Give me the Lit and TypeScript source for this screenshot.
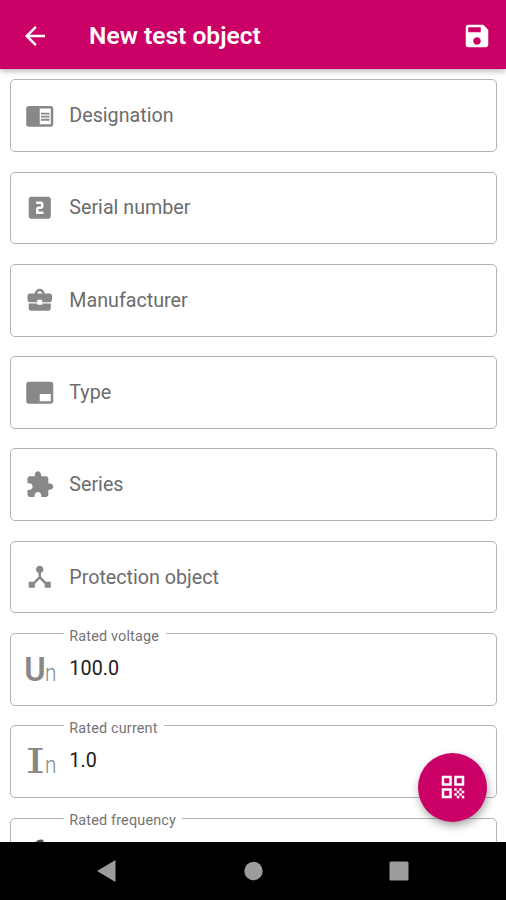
import { LitElement, html, css, svg, nothing } from "lit";
import { customElement, property } from "lit/decorators.js";

const ICONS: Record<string, string> = {
  back: "M20 11H7.83l5.59-5.59L12 4l-8 8 8 8 1.41-1.41L7.83 13H20v-2z",
  save: "M17 3H5c-1.11 0-2 .9-2 2v14c0 1.1.89 2 2 2h14c1.1 0 2-.9 2-2V7l-4-4zm-5 16c-1.66 0-3-1.34-3-3s1.34-3 3-3 3 1.34 3 3-1.34 3-3 3zm3-10H5V5h10v4z",
  reader: "M13 12h7v1.5h-7zm0-2.5h7V11h-7zm0 5h7V16h-7zM21 4H3c-1.1 0-2 .9-2 2v13c0 1.1.9 2 2 2h18c1.1 0 2-.9 2-2V6c0-1.1-.9-2-2-2zm0 15h-9V6h9v13z",
  two: "M19 3H5c-1.1 0-2 .9-2 2v14c0 1.1.9 2 2 2h14c1.1 0 2-.9 2-2V5c0-1.1-.9-2-2-2zm-4 8c0 1.11-.9 2-2 2h-2v2h4v2H9v-4c0-1.11.9-2 2-2h2V9H9V7h4c1.1 0 2 .89 2 2v2z",
  briefcase: "M10 16v-1H3v4c0 1.11.89 2 2 2h14c1.11 0 2-.89 2-2v-4h-7v1h-4zm10-9h-4c0-2.21-1.79-4-4-4S8 4.79 8 7H4c-1.1 0-2 .9-2 2v3c0 1.11.89 2 2 2h6v-2h4v2h6c1.1 0 2-.9 2-2V9c0-1.1-.9-2-2-2zM10 7c0-1.1.9-2 2-2s2 .9 2 2h-4z",
  watermark: "M21 3H3c-1.1 0-2 .9-2 2v14c0 1.1.9 2 2 2h18c1.1 0 2-.9 2-2V5c0-1.1-.9-2-2-2zm0 16h-9v-6h9v6z",
  puzzle: "M20.5 11H19V7c0-1.1-.9-2-2-2h-4V3.5C13 2.12 11.88 1 10.5 1S8 2.12 8 3.5V5H4c-1.1 0-1.99.9-1.99 2v3.8H3.5c1.49 0 2.7 1.21 2.7 2.7s-1.21 2.7-2.7 2.7H2V20c0 1.1.9 2 2 2h3.8v-1.5c0-1.49 1.21-2.7 2.7-2.7 1.49 0 2.7 1.21 2.7 2.7V22H17c1.1 0 2-.9 2-2v-4h1.5c1.38 0 2.5-1.12 2.5-2.5S21.88 11 20.5 11z",
  hub: "M17 16l-4-4V8.82C14.16 8.4 15 7.3 15 6c0-1.66-1.34-3-3-3S9 4.34 9 6c0 1.3.84 2.4 2 2.82V12l-4 4H3v5h5v-3.05l4-4.2 4 4.2V21h5v-5h-4z",
  qr: "M3 11h8V3H3v8zm2-6h4v4H5V5zM3 21h8v-8H3v8zm2-6h4v4H5v-4zM13 3v8h8V3h-8zm6 6h-4V5h4v4zM19 19h2v2h-2zM13 13h2v2h-2zM15 15h2v2h-2zM13 17h2v2h-2zM15 19h2v2h-2zM17 17h2v2h-2zM17 13h2v2h-2zM19 15h2v2h-2z",
};

const icon = (name: string) =>
  html`<svg class="icon" viewBox="0 0 24 24" fill="currentColor">${svg`<path fill-rule="evenodd" d=${ICONS[name]}></path>`}</svg>`;

interface Field {
  label: string;
  icon?: string;
  symbol?: string;
  value?: string;
}

const FIELDS: Field[] = [
  { label: "Designation", icon: "reader" },
  { label: "Serial number", icon: "two" },
  { label: "Manufacturer", icon: "briefcase" },
  { label: "Type", icon: "watermark" },
  { label: "Series", icon: "puzzle" },
  { label: "Protection object", icon: "hub" },
  { label: "Rated voltage", symbol: "U", value: "100.0" },
  { label: "Rated current", symbol: "I", value: "1.0" },
  { label: "Rated frequency", symbol: "f", value: " " },
];

@customElement("outlined-field")
export class OutlinedField extends LitElement {
  @property({ attribute: false }) field!: Field;

  static styles = css`
    :host { display: block; height: 72.7px; }
    .box {
      position: relative;
      box-sizing: border-box;
      height: 100%;
      display: flex;
      align-items: center;
      border: 1.5px solid #b4b4b4;
      border-radius: 5px;
      padding-left: 14px;
      color: #888;
    }
    .lead { width: 29.5px; height: 29.5px; flex: none; margin-right: 14.8px; }
    .icon { display: block; width: 29.5px; height: 29.5px; }
    .symbol { display: flex; align-items: baseline; line-height: 28px; white-space: nowrap; }
    .main {
      flex: none;
      width: 19.5px;
      font-size: 34px;
      font-weight: 600;
      text-indent: -0.8px;
      transform: scaleX(0.96);
      transform-origin: 0 0;
    }
    .main.I {
      font-family: "DejaVu Serif", serif;
      font-weight: 400;
      transform: scaleX(1.5);
      text-indent: 0.2px;
    }
    .main.f { text-indent: 7px; color: #555; }
    .sub { font-size: 23px; font-weight: 300; transform: scaleX(0.9); transform-origin: 0 0; }
    .text { font-size: 19.7px; color: #6c6c6c; }
    .value { color: #202020; letter-spacing: 0.1px; margin-top: -2px; }
    .legend {
      position: absolute;
      top: -7.4px;
      left: 53px;
      padding: 0 6.5px 0 5.3px;
      font-size: 14.4px;
      line-height: 20px;
      letter-spacing: 0.17px;
      background: #fff;
      color: #747474;
    }
  `;

  render() {
    const f = this.field;
    return html`<div class="box">
      ${f.value ? html`<span class="legend">${f.label}</span>` : nothing}
      <div class="lead">
        ${f.icon
          ? icon(f.icon)
          : html`<div class="symbol"><span class="main ${f.symbol}">${f.symbol}</span>${f.symbol === "f" ? nothing : html`<span class="sub">n</span>`}</div>`}
      </div>
      <span class="text ${f.value ? "value" : ""}">${f.value ?? f.label}</span>
    </div>`;
  }
}

@customElement("app-root")
export class AppRoot extends LitElement {
  static styles = css`
    :host {
      display: flex;
      flex-direction: column;
      position: relative;
      width: 506px;
      height: 900px;
      overflow: hidden;
      background: #fff;
      font-family: Roboto, sans-serif;
    }
    .icon { display: block; width: 30px; height: 30px; }
    .bar {
      flex: none;
      box-sizing: border-box;
      height: 69px;
      display: flex;
      align-items: center;
      padding: 2px 14px 0 20px;
      background: #cb0066;
      color: #fff;
      box-shadow: 0 2px 6px rgba(0, 0, 0, 0.3);
      z-index: 1;
    }
    .title { flex: 1; margin-left: 39px; font-size: 24.6px; font-weight: 600; }
    .form {
      flex: 1;
      min-height: 0;
      overflow: hidden;
      display: flex;
      flex-direction: column;
      gap: 19.6px;
      padding: 79.3px 9px 0 10px;
      margin-top: -69px;
    }
    outlined-field { flex: none; }
    .fab {
      position: absolute;
      right: 19px;
      bottom: 78.5px;
      width: 69px;
      height: 69px;
      border-radius: 50%;
      display: flex;
      align-items: center;
      justify-content: center;
      background: #cb0066;
      color: #fff;
      box-shadow: 1px 4px 9px rgba(0, 0, 0, 0.35);
    }
    .nav {
      flex: none;
      height: 58px;
      background: #000;
      z-index: 1;
      display: flex;
      justify-content: space-between;
      align-items: center;
      box-sizing: border-box;
      padding: 0 97px 0 96.5px;
    }
    .nav svg { display: block; width: 20px; height: 22px; fill: #9c9c9c; }
  `;

  render() {
    return html`
      <header class="bar">
        ${icon("back")}<span class="title">New test object</span>${icon("save")}
      </header>
      <main class="form">
        ${FIELDS.map((f) => html`<outlined-field .field=${f}></outlined-field>`)}
      </main>
      <div class="fab">${icon("qr")}</div>
      <footer class="nav">
        <svg viewBox="0 0 20 22"><path d="M18.5 0v22L0 11z"></path></svg>
        <svg viewBox="0 0 20 22"><circle cx="10.5" cy="11" r="9.2"></circle></svg>
        <svg viewBox="0 0 20 22"><rect x="0.5" y="1.5" width="19" height="19" rx="1.5"></rect></svg>
      </footer>
    `;
  }
}
